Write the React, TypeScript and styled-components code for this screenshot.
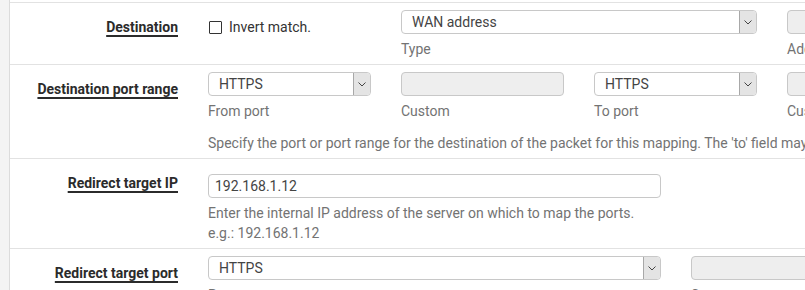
import React from "react";
import styled, { createGlobalStyle } from "styled-components";

const COL = 96.5;

const GlobalStyle = createGlobalStyle`
  body {
    margin: 0;
    background: #f4f4f4;
    overflow: hidden;
    font-family: Roboto, "Liberation Sans", sans-serif;
    font-size: 14px;
    line-height: 20px;
    color: #333;
  }
`;

const Page = styled.div`
  padding-left: 9px;
  width: 1200px;
`;

const Panel = styled.div`
  background: #fff;
  border-left: 1px solid #dcdcdc;
  padding-top: 2px;
`;

const Row = styled.div`
  display: flex;
  border-top: 1px solid #e2e2e2;
  padding-bottom: 5px;
`;

const LabelCell = styled.div`
  width: 183px;
  box-sizing: border-box;
  padding: 14px 15px 0 0;
  text-align: right;
  flex-shrink: 0;
`;

const LabelText = styled.span`
  font-weight: 700;
  color: #2b2b2b;
  text-decoration: underline;
  text-decoration-thickness: 1.5px;
  text-underline-offset: 3px;
`;

const Fields = styled.div<{ $top: number }>`
  display: flex;
  flex-wrap: wrap;
  width: ${COL * 10}px;
  padding-top: ${(p) => p.$top}px;
`;

const Col = styled.div<{ $span: number }>`
  width: ${(p) => p.$span * COL}px;
  box-sizing: border-box;
  padding: 0 15px;
`;

const FullCol = styled.div`
  width: 100%;
  box-sizing: border-box;
  padding: 0 15px;
  margin-top: 12px;
  white-space: nowrap;
  color: #737373;
`;

const SelectBox = styled.div`
  display: flex;
  height: 24px;
  box-sizing: border-box;
  border: 1px solid #c8c8c8;
  border-radius: 4px;
  background: #fff;
  overflow: hidden;
`;

const SelectValue = styled.div`
  flex: 1;
  padding-left: 10px;
  line-height: 22px;
  color: #444;
`;

const Arrow = styled.div`
  width: 16px;
  display: flex;
  align-items: center;
  justify-content: center;
  background: #e4e4e4;
  border-left: 1px solid #a8a8a8;
  border-radius: 0 3px 3px 0;
`;

const TextInput = styled.div<{ $disabled?: boolean }>`
  height: 24px;
  box-sizing: border-box;
  border: 1px solid #c8c8c8;
  border-radius: 4px;
  background: ${(p) => (p.$disabled ? "#eee" : "#fff")};
  padding-left: 6px;
  line-height: 22px;
  color: #444;
`;

const Caption = styled.div`
  margin-top: 5px;
  color: #737373;
  white-space: nowrap;
`;

const Help = styled.div`
  margin-top: 5px;
  color: #737373;
  white-space: nowrap;
`;

const CheckLine = styled.label`
  display: flex;
  align-items: center;
  height: 20px;
  margin-top: 7px;
  color: #333;
`;

const CheckBox = styled.span`
  width: 13px;
  height: 13px;
  box-sizing: border-box;
  border: 1px solid #333;
  border-radius: 1px;
  margin: 0 7px 0 1px;
`;

const Chevron = () => (
  <svg width="8" height="5" viewBox="0 0 8 5">
    <path d="M0.5 0.5 L4 4 L7.5 0.5" fill="none" stroke="#444" strokeWidth="1" />
  </svg>
);

const Select: React.FC<{ value: string }> = ({ value }) => (
  <SelectBox>
    <SelectValue>{value}</SelectValue>
    <Arrow>
      <Chevron />
    </Arrow>
  </SelectBox>
);

const App: React.FC = () => {
  return (
    <Page>
      <GlobalStyle />
      <Panel>
        <Row>
          <LabelCell>
            <LabelText>Destination</LabelText>
          </LabelCell>
          <Fields $top={7}>
            <Col $span={2}>
              <CheckLine>
                <CheckBox />
                Invert match.
              </CheckLine>
            </Col>
            <Col $span={4}>
              <Select value="WAN address" />
              <Caption>Type</Caption>
            </Col>
            <Col $span={3}>
              <TextInput $disabled />
              <Caption>Address/mask</Caption>
            </Col>
          </Fields>
        </Row>

        <Row>
          <LabelCell>
            <LabelText>Destination port range</LabelText>
          </LabelCell>
          <Fields $top={7}>
            <Col $span={2}>
              <Select value="HTTPS" />
              <Caption>From port</Caption>
            </Col>
            <Col $span={2}>
              <TextInput $disabled />
              <Caption>Custom</Caption>
            </Col>
            <Col $span={2}>
              <Select value="HTTPS" />
              <Caption>To port</Caption>
            </Col>
            <Col $span={2}>
              <TextInput $disabled />
              <Caption>Custom</Caption>
            </Col>
            <FullCol>
              Specify the port or port range for the destination of the packet for this mapping. The 'to' field may be left empty if only mapping a single port.
            </FullCol>
          </Fields>
        </Row>

        <Row>
          <LabelCell>
            <LabelText>Redirect target IP</LabelText>
          </LabelCell>
          <Fields $top={15}>
            <Col $span={5}>
              <TextInput>192.168.1.12</TextInput>
              <Help>
                Enter the internal IP address of the server on which to map the ports.
                <br />
                e.g.: 192.168.1.12
              </Help>
            </Col>
          </Fields>
        </Row>

        <Row>
          <LabelCell>
            <LabelText>Redirect target port</LabelText>
          </LabelCell>
          <Fields $top={7}>
            <Col $span={5}>
              <Select value="HTTPS" />
              <Caption>Port</Caption>
            </Col>
            <Col $span={3}>
              <TextInput $disabled />
              <Caption>Custom</Caption>
            </Col>
          </Fields>
        </Row>
      </Panel>
    </Page>
  );
};

export default App;
